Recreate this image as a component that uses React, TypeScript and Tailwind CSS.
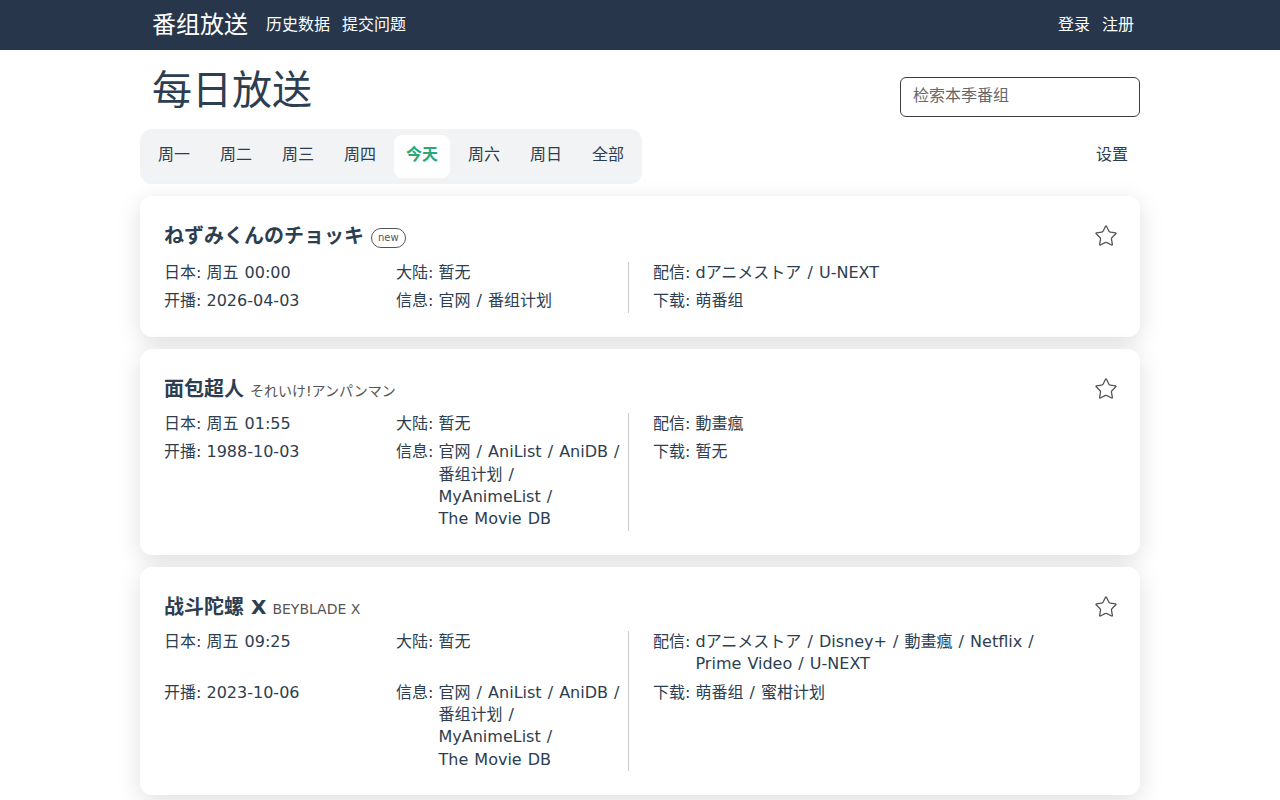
import { Star } from 'lucide-react'

type Show = {
  title: string
  sub?: string
  isNew?: boolean
  jp: string
  cn: string
  start: string
  info: string[]
  stream: string[]
  dl: string[]
}

const shows: Show[] = [
  {
    title: 'ねずみくんのチョッキ',
    isNew: true,
    jp: '周五 00:00',
    cn: '暂无',
    start: '2026-04-03',
    info: ['官网', '番组计划'],
    stream: ['dアニメストア', 'U-NEXT'],
    dl: ['萌番组'],
  },
  {
    title: '面包超人',
    sub: 'それいけ!アンパンマン',
    jp: '周五 01:55',
    cn: '暂无',
    start: '1988-10-03',
    info: ['官网', 'AniList', 'AniDB', '番组计划', 'MyAnimeList', 'The Movie DB'],
    stream: ['動畫瘋'],
    dl: [],
  },
  {
    title: '战斗陀螺 X',
    sub: 'BEYBLADE X',
    jp: '周五 09:25',
    cn: '暂无',
    start: '2023-10-06',
    info: ['官网', 'AniList', 'AniDB', '番组计划', 'MyAnimeList', 'The Movie DB'],
    stream: ['dアニメストア', 'Disney+', '動畫瘋', 'Netflix', 'Prime Video', 'U-NEXT'],
    dl: ['萌番组', '蜜柑计划'],
  },
]

const days = ['周一', '周二', '周三', '周四', '今天', '周六', '周日', '全部']

function Field({ label, items }: { label: string; items: string[] }) {
  return (
    <div className="flex">
      <span className="shrink-0">{label}:&nbsp;</span>
      <span className="[word-spacing:1px]">
        {items.length === 0
          ? '暂无'
          : items.map((it, i) => (
              <span key={it}>
                <span className="whitespace-nowrap">
                  {it}
                  {i < items.length - 1 && ' /'}
                </span>{' '}
              </span>
            ))}
      </span>
    </div>
  )
}

function ShowCard({ s }: { s: Show }) {
  return (
    <div className="rounded-xl bg-white px-6 pt-[25px] pb-6 shadow-[0_6px_24px_rgba(0,0,0,0.13)]">
      <div className="flex items-center justify-between">
        <div className="flex items-baseline gap-1.5">
          <h3 className="text-[20px] font-bold leading-[30px]">{s.title}</h3>
          {s.isNew && (
            <span className="relative top-[-2px] ml-[1px] rounded-full border border-[#555] px-[6px] text-[10px] leading-[18px] text-[#555]">
              new
            </span>
          )}
          {s.sub && <span className="text-[14px] text-[#555]">{s.sub}</span>}
        </div>
        <Star size={24} strokeWidth={1.3} className="-mr-[2px] text-[#555]" />
      </div>
      <div
        className={
          s.isNew
            ? 'mt-[11px] grid grid-cols-[232px_232px_1px_1fr] gap-y-1.5 leading-[22.4px]'
            : 'mt-[9px] grid grid-cols-[232px_232px_1px_1fr] gap-y-1.5 leading-[22.4px]'
        }
      >
        <Field label="日本" items={[s.jp]} />
        <Field label="大陆" items={[s.cn]} />
        <div className="row-span-2 bg-[#ccc]" />
        <div className="pl-6 pr-4">
          <Field label="配信" items={s.stream} />
        </div>
        <Field label="开播" items={[s.start]} />
        <div className="pr-1">
          <Field label="信息" items={s.info} />
        </div>
        <div className="pl-6">
          <Field label="下载" items={s.dl} />
        </div>
      </div>
    </div>
  )
}

export default function App() {
  return (
    <div className="min-h-screen bg-white text-[16px] text-[#2c3e50] [font-family:'DejaVu_Sans','Noto_Sans_CJK_SC',sans-serif]">
      <header className="h-[50px] bg-[#27364a] text-white">
        <div className="mx-auto flex h-full w-[1000px] items-center justify-between pl-3 pr-1.5">
          <div className="flex items-center">
            <span className="text-[24px]">番组放送</span>
            <span className="ml-[18px]">历史数据</span>
            <span className="ml-3">提交问题</span>
          </div>
          <div className="flex gap-3">
            <span>登录</span>
            <span>注册</span>
          </div>
        </div>
      </header>

      <main className="mx-auto w-[1000px]">
        <div className="flex items-start justify-between pt-[14px]">
          <h1 className="pl-3 text-[40px] leading-[52px]">每日放送</h1>
          <input
            placeholder="检索本季番组"
            className="mt-[13px] h-10 w-[240px] rounded-md border border-[#3a3f45] px-3 pb-[3px] text-[16px] outline-none placeholder:text-[#666]"
          />
        </div>

        <div className="mt-3 flex items-center justify-between">
          <div className="flex gap-1.5 rounded-xl bg-[#f1f3f5] p-1.5">
            {days.map((d) => (
              <span
                key={d}
                className={
                  d === '今天'
                    ? 'flex h-[43px] items-center rounded-lg bg-white px-3 pb-1 font-bold text-[#2aa876]'
                    : 'flex h-[43px] items-center px-3 pb-1'
                }
              >
                {d}
              </span>
            ))}
          </div>
          <span className="px-3 pb-[3px]">设置</span>
        </div>

        <div className="mt-3 flex flex-col gap-3">
          {shows.map((s) => (
            <ShowCard key={s.title} s={s} />
          ))}
        </div>
      </main>
    </div>
  )
}
